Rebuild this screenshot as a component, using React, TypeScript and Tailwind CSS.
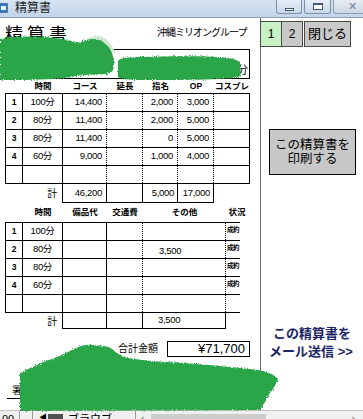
const t1 = [
  ['1', '100分', '14,400', '', '2,000', '3,000', ''],
  ['2', '80分', '11,400', '', '2,000', '5,000', ''],
  ['3', '80分', '11,400', '', '0', '5,000', ''],
  ['4', '60分', '9,000', '', '1,000', '4,000', ''],
  ['', '', '', '', '', '', ''],
]

const t2 = [
  ['1', '100分', '', '', '', '成約'],
  ['2', '80分', '', '', '3,500', '成約'],
  ['3', '80分', '', '', '', '成約'],
  ['4', '60分', '', '', '', '成約'],
  ['', '', '', '', '', ''],
]

function TitleBar() {
  return (
    <div className="flex h-[18px] items-start border-b border-[#8d9db3] bg-gradient-to-b from-[#d6e3f2] to-[#c3d5ea]">
      <div className="mt-[3px] h-[10px] w-[8px] rounded-r-[1px] bg-[#3b78b8]">
        <div className="ml-[1px] mt-[3px] h-[4px] w-[5px] bg-[#e8f2fb]" />
      </div>
      <span className="ml-[7px] mt-[1px] text-[12px] leading-[14px] text-[#1e1e1e]">精算書</span>
      <div className="ml-auto flex">
        <div className="flex h-[14px] w-[26px] items-end justify-center rounded-b-[3px] border border-t-0 border-[#7f8fa6] bg-gradient-to-b from-[#e6eef8] to-[#c9d8ea] pb-[2px]">
          <div className="h-[3px] w-[9px] border border-[#44556b] bg-white" />
        </div>
        <div className="ml-[2px] flex h-[14px] w-[27px] items-start justify-center rounded-b-[3px] border border-t-0 border-[#7f8fa6] bg-gradient-to-b from-[#e6eef8] to-[#c9d8ea] pt-[3px]">
          <div className="h-[7px] w-[10px] border border-[#44556b] border-t-2 bg-white" />
        </div>
        <div className="ml-[2px] flex h-[14px] w-[30px] items-start rounded-bl-[3px] border border-r-0 border-t-0 border-[#8f9cad] bg-gradient-to-b from-[#e8edf3] to-[#cdd6e1] pl-[14px] text-[11px] leading-[12px] text-[#7a8699]">
          ✕
        </div>
      </div>
    </div>
  )
}

function HeadRow({ cols, labels, className }: { cols: string; labels: string[]; className: string }) {
  return (
    <div className={`ml-[6px] grid items-center text-[8.5px] font-bold ${cols} ${className}`}>
      {labels.map((l, i) => (
        <div key={i} className="whitespace-nowrap text-center">{l}</div>
      ))}
    </div>
  )
}

function LeftPanel() {
  return (
    <div className="w-[260px] shrink-0 pt-[8px]">
      <div className="flex h-[18px] items-start pl-[5px]">
        <div className="w-[152px] text-[18px] leading-[18px] tracking-[4px]">精算書</div>
        <div className="mt-[1px] whitespace-nowrap text-[10px] leading-[12px] tracking-[-1px]">沖縄ミリオングループ</div>
      </div>

      <div className="ml-[5px] mt-[5px] flex h-[30px] w-[245px] items-end justify-end border border-black pb-[1px] pr-[1px] text-[11px] leading-[13px]">
        分
      </div>

      <HeadRow
        cols="grid-cols-[17px_40px_44px_36px_35px_36px_36px]"
        className="h-[14px] pt-[1px]"
        labels={['', '時間', 'コース', '延長', '指名', 'OP', 'コスプレ']}
      />

      <div className="ml-[5px] w-[245px] border-l border-t border-black text-[9.5px] tracking-[-0.3px]">
        {t1.map((r, i) => (
          <div key={i} className="grid h-[18px] grid-cols-[17px_40px_44px_36px_35px_36px_36px] border-b border-black">
            <div className="flex items-center justify-center border-r border-black text-[8.5px] font-bold">{r[0]}</div>
            <div className="flex items-center justify-center border-r border-black">{r[1]}</div>
            <div className="flex items-center justify-end border-r border-dotted border-black pr-[4px]">{r[2]}</div>
            <div className="flex items-center justify-end border-r border-dotted border-black pr-[4px]">{r[3]}</div>
            <div className="flex items-center justify-end border-r border-dotted border-black pr-[4px]">{r[4]}</div>
            <div className="flex items-center justify-end border-r border-dotted border-black pr-[4px]">{r[5]}</div>
            <div className="flex items-center justify-end border-r border-black pr-[4px]">{r[6]}</div>
          </div>
        ))}
      </div>

      <div className="ml-[5px] flex h-[19px] text-[9.5px] tracking-[-0.3px]">
        <div className="flex w-[57px] items-center justify-end pr-[5px] text-[10px]">計</div>
        <div className="grid grid-cols-[44px_36px_35px_36px] border-b border-l border-black">
          <div className="flex items-center justify-end border-r border-black pr-[4px]">46,200</div>
          <div className="border-r border-black" />
          <div className="flex items-center justify-end border-r border-black pr-[3px]">5,000</div>
          <div className="flex items-center justify-end border-r border-black pr-[3px]">17,000</div>
        </div>
      </div>

      <HeadRow
        cols="grid-cols-[17px_40px_44px_36px_83px_22px]"
        className="h-[19px]"
        labels={['', '時間', '備品代', '交通費', 'その他', '状況']}
      />

      <div className="ml-[5px] w-[235px] border-l border-t border-black text-[9.5px] tracking-[-0.3px]">
        {t2.map((r, i) => (
          <div key={i} className="grid h-[18px] grid-cols-[17px_40px_44px_36px_83px_14px] border-b border-black">
            <div className="flex items-center justify-center border-r border-black text-[8.5px] font-bold">{r[0]}</div>
            <div className="flex items-center justify-center border-r border-black">{r[1]}</div>
            <div className="border-r border-black" />
            <div className="border-r border-dotted border-black" />
            <div className="flex items-end border-r border-dotted border-black pb-[1px] pl-[16px] leading-[12px]">{r[4]}</div>
            <div className="whitespace-nowrap pl-[1px] pt-[3px] text-[6.5px] font-bold leading-[8px] tracking-[-0.6px]">{r[5]}</div>
          </div>
        ))}
      </div>

      <div className="ml-[5px] flex h-[16px] text-[9.5px] tracking-[-0.3px]">
        <div className="flex w-[57px] items-center justify-end pr-[5px] text-[10px]">計</div>
        <div className="grid grid-cols-[44px_36px_83px] border-b border-l border-black">
          <div className="border-r border-black" />
          <div className="border-r border-black" />
          <div className="flex items-center border-r border-black pl-[15px]">3,500</div>
        </div>
      </div>

      <div className="mt-[12px] flex h-[16px] w-[250px] items-center justify-end">
        <span className="mr-[9px] text-[10px] leading-[12px]">合計金額</span>
        <div className="flex h-[16px] w-[83px] items-center justify-end border border-black pr-[4px] text-[13px] leading-[14px]">
          ¥71,700
        </div>
      </div>

      <div className="ml-[7px] mt-[26px] h-[16px] w-[60px] border-b border-black pl-[5px] text-[10px] leading-[15px]">
        署名
      </div>
    </div>
  )
}

function RightPanel() {
  return (
    <div className="flex-1 border-l border-[#6a6a6a] bg-white">
      <div className="-ml-px mt-[3px] flex h-[26px] text-[12px]">
        <div className="flex w-[22px] items-center justify-center border border-[#4a4a4a] bg-[#c8f2c4]">1</div>
        <div className="-ml-px flex w-[22px] items-center justify-center border border-[#4a4a4a] bg-[#c9c9c9]">2</div>
        <div className="ml-[1px] flex w-[47px] items-center justify-center border border-[#4a4a4a] bg-[#c9c9c9] text-[13px]">閉じる</div>
      </div>

      <div className="ml-[8px] mt-[82px] flex h-[46px] w-[87px] flex-col items-center justify-center border border-black bg-[#c8c8c8] text-[12.5px] leading-[14px]">
        <span>この精算書を</span>
        <span>印刷する</span>
      </div>

      <div className="mt-[150px] flex flex-col items-center text-[13px] font-bold leading-[18px] text-[#1b2566]">
        <span>この精算書を</span>
        <span className="-ml-[2px]">メール送信 &gt;&gt;</span>
      </div>
    </div>
  )
}

function BottomBar() {
  return (
    <div className="flex h-[20px] items-start border-t border-[#c4c4c4] bg-[#f0f0f0] text-[11px] leading-[13px]">
      <div className="h-full w-[20px] border-r border-[#9a9a9a] pl-[2px] pt-[2px]">00</div>
      <div className="ml-[12px] h-full border-l border-[#9a9a9a]" />
      <div className="ml-[6px] mt-[3px] text-[8px] leading-[8px]">◀</div>
      <div className="ml-[1px] mt-[3px] h-[8px] w-[15px] bg-[#505050]" />
      <div className="ml-[5px] pt-[2px]">ブラウブ</div>
      <div className="ml-auto flex h-full w-[228px] border-l border-[#9a9a9a]">
        <span className="ml-[5px] pt-[1px] text-[#555]">‹</span>
        <div className="ml-[6px] mt-[3px] h-full w-[115px] bg-[#cdcdcd]" />
        <span className="ml-auto mr-[8px] pt-[1px] text-[#555]">›</span>
      </div>
    </div>
  )
}

function Redactions() {
  return (
    <svg className="pointer-events-none absolute left-0 top-0" width="363" height="419" viewBox="0 0 363 419">
      <defs>
        <filter id="rough" x="-10%" y="-10%" width="120%" height="120%">
          <feTurbulence type="fractalNoise" baseFrequency="0.9" numOctaves="2" seed="3" />
          <feDisplacementMap in="SourceGraphic" scale="3.5" />
        </filter>
      </defs>
      <g filter="url(#rough)">
        <path
          d="M82,44 C86,38 94,35 100,36 C106,38 112,44 115,52 L112,54 C108,46 102,40 96,40 C90,40 86,43 84,46 Z"
          fill="#cfe8d4"
        />
        <path
          d="M0,39 C15,36 35,36 55,38 C65,39 72,41 78,43 C82,41 88,39 94,39 C100,39 106,43 110,49 C114,56 115,64 113,70 C111,74 104,75 96,74 C80,75 70,78 55,79 C35,80 15,80 0,80 Z"
          fill="#2ba64a"
        />
        <path
          d="M118,61 C120,58 128,57 140,57 C170,56 200,56 220,57 C232,58 238,60 240,62 L241,77 C225,80 180,80 140,80 C128,80 121,79 118,77 Z"
          fill="#2ba64a"
        />
        <path
          d="M20,373 C30,368 42,362 52,359 C60,356 66,353 74,349 C80,346 86,344 92,345 C100,345 108,346 112,349 C116,352 120,356 128,358 C140,360 160,362 185,363 C210,365 235,367 258,370 C266,371 274,374 278,379 C276,386 270,392 267,398 C264,403 262,407 260,410 L20,411 Z"
          fill="#2ba64a"
        />
      </g>
    </svg>
  )
}

export default function App() {
  return (
    <div className="relative h-[419px] w-[363px] overflow-hidden bg-white font-['Liberation_Sans','Noto_Sans_CJK_JP',sans-serif] text-black">
      <TitleBar />
      <div className="flex h-[392px]">
        <LeftPanel />
        <RightPanel />
      </div>
      <BottomBar />
      <Redactions />
    </div>
  )
}
